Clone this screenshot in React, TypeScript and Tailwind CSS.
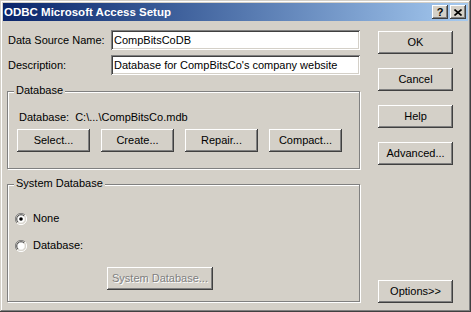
import React from "react";

const raised =
  "bg-[#d4d0c8] shadow-[inset_-1px_-1px_0_#404040,inset_1px_1px_0_#ffffff,inset_-2px_-2px_0_#808080,inset_2px_2px_0_#d4d0c8]";
const sunken =
  "bg-white shadow-[inset_1px_1px_0_#808080,inset_-1px_-1px_0_#ffffff,inset_2px_2px_0_#404040,inset_-2px_-2px_0_#d4d0c8]";

function Button({ label, className = "", disabled = false }: { label: string; className?: string; disabled?: boolean }) {
  return (
    <div
      className={`${raised} h-[23px] flex items-center justify-center ${
        disabled ? "text-[#808080] [text-shadow:1px_1px_0_#ffffff]" : "text-black"
      } ${className}`}
    >
      {label}
    </div>
  );
}

function Radio({ checked }: { checked: boolean }) {
  return (
    <svg width="12" height="12" viewBox="0 0 12 12" className="shrink-0">
      <path d="M10 2A5.5 5.5 0 0 0 2 10" fill="none" stroke="#808080" strokeWidth="1" />
      <path d="M10 2A5.5 5.5 0 0 1 2 10" fill="none" stroke="#ffffff" strokeWidth="1" />
      <circle cx="6" cy="6" r="4.5" fill="#ffffff" />
      <path d="M9 3A4.2 4.2 0 0 0 3 9" fill="none" stroke="#404040" strokeWidth="1" />
      <path d="M9 3A4.2 4.2 0 0 1 3 9" fill="none" stroke="#d4d0c8" strokeWidth="1" />
      {checked && <circle cx="6" cy="6" r="1.8" fill="#000000" />}
    </svg>
  );
}

function Group({ title, className = "", children }: { title: string; className?: string; children: React.ReactNode }) {
  return (
    <div className={`relative border border-[#808080] shadow-[1px_1px_0_#ffffff,inset_1px_1px_0_#ffffff] ${className}`}>
      <span className="absolute left-[6px] top-[-8px] bg-[#d4d0c8] px-[2px] leading-[13px]">{title}</span>
      {children}
    </div>
  );
}

export default function App() {
  return (
    <div
      className="w-[471px] h-[312px] bg-[#d4d0c8] p-[3px] flex flex-col text-[11px] leading-[13px] text-black shadow-[inset_-1px_-1px_0_#404040,inset_1px_1px_0_#d4d0c8,inset_-2px_-2px_0_#808080,inset_2px_2px_0_#ffffff]"
      style={{ fontFamily: '"Liberation Sans", Arial, sans-serif' }}
    >
      <div className="h-[18px] flex items-center bg-gradient-to-r from-[#0a246a] to-[#a6caf0] pl-[1px] pr-[2px]">
        <span className="text-white font-bold text-[11.5px]">ODBC Microsoft Access Setup</span>
        <div className="ml-auto flex gap-[2px]">
          <div className={`${raised} w-[16px] h-[14px] flex items-center justify-center font-bold text-[11px] leading-none`}>?</div>
          <div className={`${raised} w-[16px] h-[14px] flex items-center justify-center`}>
            <svg width="8" height="7" viewBox="0 0 8 7">
              <path d="M0.5 0.5L7.5 6.5M7.5 0.5L0.5 6.5" stroke="#000" strokeWidth="1.6" />
            </svg>
          </div>
        </div>
      </div>

      <div className="flex-1 flex pl-[4px] pb-[6px]">
        <div className="w-[353px] flex flex-col pt-[9px]">
          <div className="flex items-center h-[20px]">
            <span className="ml-[1px]">Data Source Name:</span>
            <div className={`${sunken} ml-auto w-[249px] h-[20px] flex items-center pl-[3px]`}>CompBitsCoDB</div>
          </div>
          <div className="flex items-center h-[20px] mt-[5px]">
            <span className="ml-[1px]">Description:</span>
            <div className={`${sunken} ml-auto w-[249px] h-[20px] flex items-center pl-[3px]`}>
              Database for CompBitsCo's company website
            </div>
          </div>

          <Group title="Database" className="mt-[16px] h-[78px] pt-[19px] pl-[9px]">
            <div className="ml-[2px] flex">
              <span>Database:</span>
              <span className="ml-[6px]">C:\...\CompBitsCo.mdb</span>
            </div>
            <div className="flex gap-[11px] mt-[5px]">
              <Button label="Select..." className="w-[73px]" />
              <Button label="Create..." className="w-[73px]" />
              <Button label="Repair..." className="w-[73px]" />
              <Button label="Compact..." className="w-[73px]" />
            </div>
          </Group>

          <Group title="System Database" className="mt-[15px] h-[118px] pt-[27px] pl-[7px]">
            <div className="flex items-center gap-[6px]">
              <Radio checked />
              <span>None</span>
            </div>
            <div className="flex items-center gap-[6px] mt-[14px]">
              <Radio checked={false} />
              <span>Database:</span>
            </div>
            <Button label="System Database..." disabled className="w-[106px] ml-[92px] mt-[15px]" />
          </Group>
        </div>

        <div className="ml-[18px] w-[75px] flex flex-col pt-[10px]">
          <Button label="OK" />
          <Button label="Cancel" className="mt-[14px]" />
          <Button label="Help" className="mt-[14px]" />
          <Button label="Advanced..." className="mt-[14px]" />
          <Button label="Options>>" className="mt-auto" />
        </div>
      </div>
    </div>
  );
}
